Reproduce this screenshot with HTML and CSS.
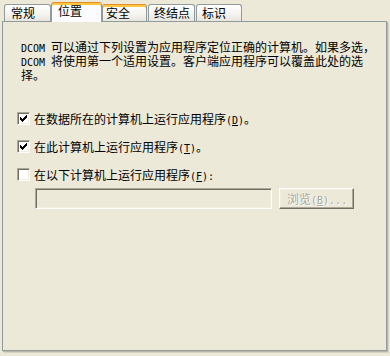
FILE: index.html
```html
<!DOCTYPE html>
<html lang="zh-CN">
<head>
<meta charset="utf-8">
<title>位置</title>
<link rel="stylesheet" href="styles.css">
</head>
<body>
<div class="dialog">
  <div class="tabs">
    <div class="tab t1">常规</div>
    <div class="tab sel t2">位置</div>
    <div class="tab hot t3">安全</div>
    <div class="tab t4">终结点</div>
    <div class="tab t5">标识</div>
  </div>
  <div class="panel">
    <p class="desc"><span class="hw">DCOM </span>可以通过下列设置为应用程序定位正确的计算机。如果多选，<br><span class="hw">DCOM </span>将使用第一个适用设置。客户端应用程序可以覆盖此处的选<br>择。</p>
    <div class="opts">
      <div class="opt">
        <span class="cb"><svg width="7" height="7" viewBox="0 0 7 7" shape-rendering="crispEdges"><path d="M0 2h1v3H0zM1 3h1v3H1zM2 4h1v3H2zM3 3h1v3H3zM4 2h1v3H4zM5 1h1v3H5zM6 0h1v3H6z" fill="#000"/></svg></span>
        <span class="lbl">在数据所在的计算机上运行应用程序<span class="hw">(<u>D</u>)</span>。</span>
      </div>
      <div class="opt">
        <span class="cb"><svg width="7" height="7" viewBox="0 0 7 7" shape-rendering="crispEdges"><path d="M0 2h1v3H0zM1 3h1v3H1zM2 4h1v3H2zM3 3h1v3H3zM4 2h1v3H4zM5 1h1v3H5zM6 0h1v3H6z" fill="#000"/></svg></span>
        <span class="lbl">在此计算机上运行应用程序<span class="hw">(<u>T</u>)</span>。</span>
      </div>
      <div class="opt">
        <span class="cb"></span>
        <span class="lbl">在以下计算机上运行应用程序<span class="hw">(<u>F</u>):</span></span>
      </div>
    </div>
    <div class="remote">
      <div class="edit"></div>
      <div class="btn">浏览<span class="hw">(<u>B</u>)...</span></div>
    </div>
  </div>
</div>
</body>
</html>
```
FILE: styles.css
```css
html, body {
  margin: 0;
  padding: 0;
}
body {
  width: 390px;
  height: 356px;
  overflow: hidden;
  background: #ECE9D8;
  color: #000;
  font-family: "Noto Sans CJK SC", "Noto Sans CJK JP", sans-serif;
  font-size: 12px;
  line-height: 13px;
}
.hw {
  font-family: "DejaVu Sans Mono", "Liberation Mono", monospace;
  font-size: 10px;
  line-height: 1;
}
.tabs {
  display: flex;
  align-items: flex-end;
  height: 21px;
  padding-left: 4px;
}
.tab {
  box-sizing: border-box;
  height: 17px;
  border: 1px solid #919B9C;
  border-bottom: 0;
  border-radius: 3px 3px 0 0;
  background: linear-gradient(#FFFFFF, #F5F4F0 55%, #E6E5DE);
  padding-left: 6px;
  line-height: 15px;
  white-space: nowrap;
}
.t1 { width: 47px; }
.t2 { width: 51px; }
.t3 { width: 45px; padding-left: 3px; }
.t4 { width: 47px; margin-left: 1px; padding-left: 5px; }
.t5 { width: 46px; margin-left: 1px; padding-left: 5px; }
.sel {
  position: relative;
  z-index: 1;
  height: 20px;
  margin-bottom: -1px;
  background: #FCFCFE;
  border-top-color: #E68B2C;
  box-shadow: inset 0 2px 0 #FFC73C;
  line-height: 16px;
}
.hot {
  border-top-color: #E68B2C;
  box-shadow: inset 0 2px 0 #FFC73C;
}
.panel {
  box-sizing: border-box;
  width: 385px;
  height: 330px;
  margin-left: 2px;
  border: 1px solid #919B9C;
  box-shadow: 1px 1px 0 #B9B6A8, 2px 2px 0 #D6D3C3;
  background: #ECE9D8;
}
.desc {
  margin: 0;
  padding: 18px 0 0 18px;
  height: 39px;
  white-space: nowrap;
}
.opts {
  display: flex;
  flex-direction: column;
  gap: 15px;
  margin-top: 33px;
  padding-left: 14px;
}
.opt {
  display: flex;
  align-items: center;
  gap: 4px;
  height: 13px;
  white-space: nowrap;
}
.cb {
  box-sizing: border-box;
  width: 13px;
  height: 13px;
  padding: 2px;
  background: #FFFFFF;
  border: 1px solid;
  border-color: #ACA899 #FFFFFF #FFFFFF #ACA899;
  box-shadow: inset 1px 1px 0 #716F64, inset -1px -1px 0 #F1EFE2;
  flex: none;
}
.cb svg {
  display: block;
}
.lbl {
  line-height: 13px;
}
.remote {
  display: flex;
  gap: 7px;
  margin-top: 7px;
  padding-left: 32px;
}
.edit {
  box-sizing: border-box;
  width: 237px;
  height: 21px;
  background: #ECE9D8;
  border: 1px solid;
  border-color: #ACA899 #FFFFFF #FFFFFF #ACA899;
  box-shadow: inset 1px 1px 0 #716F64, inset -1px -1px 0 #F1EFE2;
}
.btn {
  box-sizing: border-box;
  width: 75px;
  height: 21px;
  padding-left: 7px;
  background: #ECE9D8;
  border: 1px solid;
  border-color: #FFFFFF #716F64 #716F64 #FFFFFF;
  box-shadow: inset -1px -1px 0 #ACA899, inset 1px 1px 0 #F1EFE2;
  color: #ACA899;
  text-shadow: 1px 1px 0 #FFFFFF;
  line-height: 19px;
  white-space: nowrap;
}
```
